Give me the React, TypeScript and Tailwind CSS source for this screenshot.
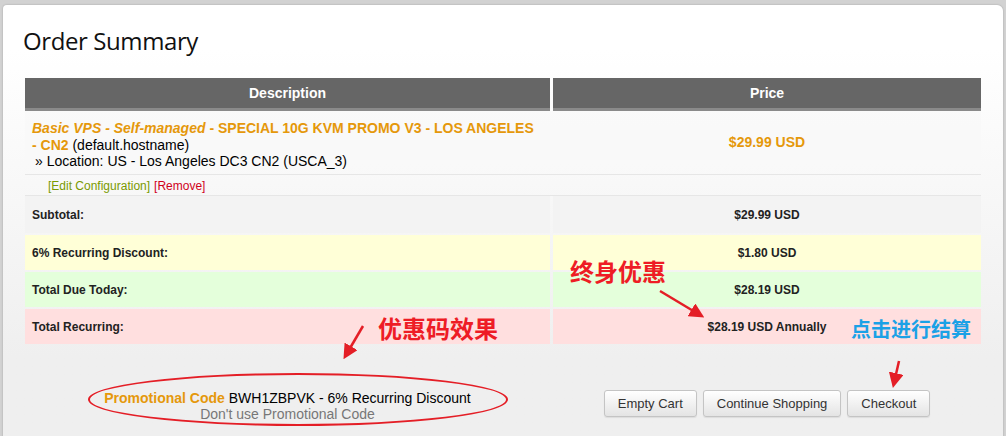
import React from "react";

const orange = "text-[#e5980b]";

function Row({ label, price, bg }: { label: string; price: string; bg: string }) {
  return (
    <div className="flex gap-x-[3px] h-[35px] text-[12px] font-bold text-[#222]">
      <div className={`w-[525px] flex items-center px-[7px] ${bg}`}>{label}</div>
      <div className={`flex-1 flex items-center justify-center ${bg}`}>{price}</div>
    </div>
  );
}

function Btn({ children }: { children: React.ReactNode }) {
  return (
    <button className="h-[27px] px-[13px] rounded-[3px] border border-[#c4c4c4] bg-gradient-to-b from-white to-[#e4e4e4] text-[13px] text-[#333] shadow-[0_1px_1px_rgba(0,0,0,0.08)]">
      {children}
    </button>
  );
}

export default function App() {
  return (
    <div className="w-[1006px] h-[436px] overflow-hidden bg-[#d2d2d2] pl-[3px] pt-[5px] pr-[3px] font-['Liberation_Sans',Arial,sans-serif]">
      <div className="relative h-[440px] rounded-tl-[4px] rounded-tr-[6px] bg-gradient-to-b from-white from-10% to-[#efefef] to-80% shadow-[0_0_2px_rgba(0,0,0,0.25)] pt-[19px] px-[22px]">
        <h1 className="font-['Open_Sans',sans-serif] text-[24px] leading-[34px] text-[#111] tracking-[-0.4px] -ml-[2px]">Order Summary</h1>

        <div className="mt-[20px] w-[956px]">
          {/* header */}
          <div className="flex gap-x-[3px] h-[33px] text-white text-[14px] font-bold">
            <div className="w-[525px] flex items-center justify-center bg-[#666] border-b-[3px] border-[#8a8a8a]">Description</div>
            <div className="flex-1 flex items-center justify-center bg-[#666] border-b-[3px] border-[#8a8a8a]">Price</div>
          </div>

          {/* item */}
          <div className="flex gap-x-[3px] h-[64px] border-b border-[#e6e6e6] bg-[#f8f8f8]/60">
            <div className="w-[525px] pl-[7px] pr-[14px] pt-[9px] text-[14px] leading-[16.5px] text-black">
              <div>
                <span className={`${orange} font-bold italic`}>Basic VPS - Self-managed</span>
                <span className={`${orange} font-bold`}> - SPECIAL 10G KVM PROMO V3 - LOS ANGELES <span className="whitespace-nowrap">- CN2</span></span> (default.hostname)
              </div>
              <div className="pl-[3px]">» Location: US - Los Angeles DC3 CN2 (USCA_3)</div>
            </div>
            <div className={`flex-1 flex items-center justify-center text-[14px] font-bold ${orange}`}>$29.99 USD</div>
          </div>
          <div className="flex gap-x-[3px] h-[21px] border-b border-[#e6e6e6] text-[12px]">
            <div className="w-[525px] pl-[23px] pt-[1px] flex items-center">
              <span className="text-[#7a9a01]">[Edit Configuration]</span>
              <span className="ml-[4px] text-[#d0021b]">[Remove]</span>
            </div>
            <div className="flex-1" />
          </div>

          <div className="flex flex-col gap-y-[2px]">
            <div className="flex gap-x-[3px] h-[37px] text-[12px] font-bold text-[#222]">
              <div className="w-[525px] flex items-center px-[7px] bg-[#f3f3f3]">Subtotal:</div>
              <div className="flex-1 flex items-center justify-center bg-[#f3f3f3]">$29.99 USD</div>
            </div>
            <Row label="6% Recurring Discount:" price="$1.80 USD" bg="bg-[#ffffd7]" />
            <Row label="Total Due Today:" price="$28.19 USD" bg="bg-[#e4ffdb]" />
            <Row label="Total Recurring:" price="$28.19 USD Annually" bg="bg-[#ffdfdf]" />
          </div>

          {/* bottom */}
          <div className="flex gap-x-[3px] pt-[46px]">
            <div className="w-[525px] flex flex-col items-center text-[14px] leading-[16px]">
              <div>
                <span className={`${orange} font-bold`}>Promotional Code</span>{" "}
                <span className="text-black">BWH1ZBPVK - 6% Recurring Discount</span>
              </div>
              <div className="text-[#777]">Don't use Promotional Code</div>
            </div>
            <div className="flex-1 flex justify-center gap-[6px]">
              <Btn>Empty Cart</Btn>
              <Btn>Continue Shopping</Btn>
              <Btn>Checkout</Btn>
            </div>
          </div>
        </div>

        {/* annotations */}
        <div className="absolute left-[85px] top-[368px] w-[420px] h-[53px] rounded-[50%] border-2 border-[#e41e26]" />
        <div className="absolute left-[375px] top-[309px] text-[24px] font-bold text-[#ee1c25] font-['Noto_Sans_CJK_SC',sans-serif] leading-[28px]">优惠码效果</div>
        <div className="absolute left-[567px] top-[252px] text-[24px] font-bold text-[#ee1c25] font-['Noto_Sans_CJK_SC',sans-serif] leading-[28px]">终身优惠</div>
        <div className="absolute left-[848px] top-[310px] text-[20px] font-bold text-[#1ba1e6] font-['Noto_Sans_CJK_SC',sans-serif] leading-[28px]">点击进行结算</div>
        <svg className="absolute left-0 top-0 pointer-events-none" width="1000" height="436">
          <defs>
            <marker id="ah" markerWidth="6" markerHeight="6" refX="4" refY="3" orient="auto" markerUnits="strokeWidth">
              <path d="M0,0 L6,3 L0,6 z" fill="#e41e26" />
            </marker>
          </defs>
          <line x1="360" y1="321" x2="343" y2="350" stroke="#e41e26" strokeWidth="2.5" markerEnd="url(#ah)" />
          <line x1="657" y1="286" x2="697" y2="310" stroke="#e41e26" strokeWidth="2.5" markerEnd="url(#ah)" />
          <line x1="896" y1="356" x2="891" y2="378" stroke="#e41e26" strokeWidth="2.5" markerEnd="url(#ah)" />
        </svg>
      </div>
    </div>
  );
}
